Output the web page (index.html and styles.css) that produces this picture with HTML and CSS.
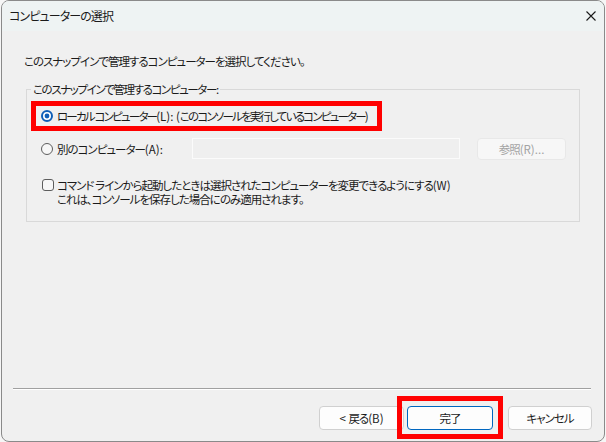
FILE: index.html
```html
<!DOCTYPE html>
<html lang="ja">
<head>
<meta charset="utf-8">
<title>コンピューターの選択</title>
<link rel="stylesheet" href="styles.css">
</head>
<body>
<div class="window">
  <div class="titlebar">
    <span class="title">コンピューターの選択</span>
    <svg class="close" width="10" height="10" viewBox="0 0 10 10"><path d="M0.5 0.5 L9.5 9.5 M9.5 0.5 L0.5 9.5" stroke="#1a1a1a" stroke-width="1.1" fill="none"/></svg>
  </div>
  <div class="main">
    <p class="intro">このスナップインで管理するコンピューターを選択してください。</p>
    <fieldset class="group">
      <legend class="legend">このスナップインで管理するコンピューター:</legend>
      <div class="row row-local">
        <svg class="radio" width="12" height="12" viewBox="0 0 12 12"><circle cx="6" cy="6" r="5" fill="#fff" stroke="#0f5fb8" stroke-width="2"/><circle cx="6" cy="6" r="2.4" fill="#0f5fb8"/></svg>
        <span class="local-text">ローカル コンピューター<span class="lat">(L): (</span>このコンソールを実行しているコンピューター<span class="lat">)</span></span>
      </div>
      <div class="row row-other">
        <svg class="radio" width="12" height="12" viewBox="0 0 12 12"><circle cx="6" cy="6" r="5.5" fill="#f7f7f7" stroke="#5d5d5d" stroke-width="1"/></svg>
        <span class="other-label">別のコンピューター<span class="lat">(A):</span></span>
        <div class="input"></div>
        <div class="browse"><span>参照<span class="lat">(R)...</span></span></div>
      </div>
      <div class="row row-check">
        <span class="checkbox"></span>
        <div class="check-text">
          <div>コマンド ラインから起動したときは選択されたコンピューターを変更できるようにする<span class="lat">(W)</span></div>
          <div>これは、コンソールを保存した場合にのみ適用されます。</div>
        </div>
      </div>
    </fieldset>
  </div>
  <div class="separator"></div>
  <div class="footer">
    <div class="btn"><span><span class="lat">&lt; </span>戻る<span class="lat">(B)</span></span></div>
    <div class="btn btn-default"><span>完了</span></div>
    <div class="btn btn-cancel"><span>キャンセル</span></div>
  </div>
</div>
</body>
</html>
```
FILE: styles.css
```css
* { box-sizing: border-box; }
html, body {
  margin: 0;
  padding: 0;
  background: #f6f6f6;
}
body {
  font-family: "Noto Sans CJK JP", "Noto Sans", sans-serif;
  font-size: 11.5px;
  letter-spacing: -1px;
  font-feature-settings: "palt";
  color: #1a1a1a;
  width: 606px;
  height: 442px;
  overflow: hidden;
}
.lat { letter-spacing: 0; }
.window {
  margin-left: 1px;
  width: 604px;
  height: 442px;
  border: 1px solid #8a8a8a;
  border-radius: 8px;
  background: #f0f0f0;
  overflow: hidden;
  display: flex;
  flex-direction: column;
}
.titlebar {
  height: 30px;
  flex: none;
  background: #eef3f3;
  display: flex;
  align-items: center;
  justify-content: space-between;
  padding: 0 8px 0 7px;
}
.title { line-height: 16px; font-size: 12px; letter-spacing: -0.9px; }
.close { display: block; }
.main {
  flex: 1;
  padding: 22px 0 0 22px;
}
.intro {
  margin: 0;
  line-height: 16px;
}
.group {
  margin: 12px 0 0 2px;
  width: 554px;
  height: 141px;
  border: 1px solid #d9d9d9;
  border-radius: 0;
  padding: 0;
}
.legend {
  margin-left: 4px;
  padding: 0 2px;
  line-height: 16px;
  letter-spacing: -1.4px;
}
.row {
  display: flex;
  align-items: center;
  white-space: nowrap;
}
.radio { flex: none; display: block; }
.row-local {
  margin: 9px 0 0 9px;
  width: 341px;
  height: 20px;
  padding-left: 5px;
  gap: 4px;
  outline: 5px solid #ff0000;
}
.local-text { letter-spacing: -1.8px; }
.row-other {
  margin: 11px 0 0 14px;
  height: 23px;
  gap: 4px;
}
.other-label { width: 131px; }
.input {
  width: 268px;
  height: 21px;
  border: 1px solid #fbfbfb;
  background: #efefef;
}
.browse {
  margin-left: 13px;
  width: 89px;
  height: 22px;
  border: 1px solid #e8e8e8;
  border-radius: 4px;
  background: #f7f7f7;
  color: #a3a3a3;
  display: flex;
  align-items: center;
  justify-content: center;
}
.row-check {
  margin: 18px 0 0 15px;
  align-items: flex-start;
  gap: 3px;
}
.checkbox {
  flex: none;
  margin-top: 1px;
  width: 12px;
  height: 12px;
  border: 1px solid #5d5d5d;
  border-radius: 3px;
  background: #f7f7f7;
}
.check-text { line-height: 14px; }
.separator {
  flex: none;
  margin: 0 13px 0 11px;
  height: 2px;
  border-top: 1px solid #a0a0a0;
  border-bottom: 1px solid #ffffff;
}
.footer {
  flex: none;
  display: flex;
  justify-content: flex-end;
  padding: 16px 12px 11px 0;
}
.btn {
  width: 85px;
  height: 24px;
  border: 1px solid #d0d0d0;
  border-radius: 4px;
  background: #fdfdfd;
  display: flex;
  align-items: center;
  justify-content: center;
}
.btn-default {
  position: relative;
  margin-left: 3px;
  width: 86px;
  border-color: #0067c0;
}
.btn-default::after {
  content: "";
  position: absolute;
  left: -11px;
  right: -11px;
  top: -11px;
  bottom: -10px;
  border: 5px solid #ff0000;
}
.btn-cancel {
  margin-left: 15px;
  width: 84px;
}
```
